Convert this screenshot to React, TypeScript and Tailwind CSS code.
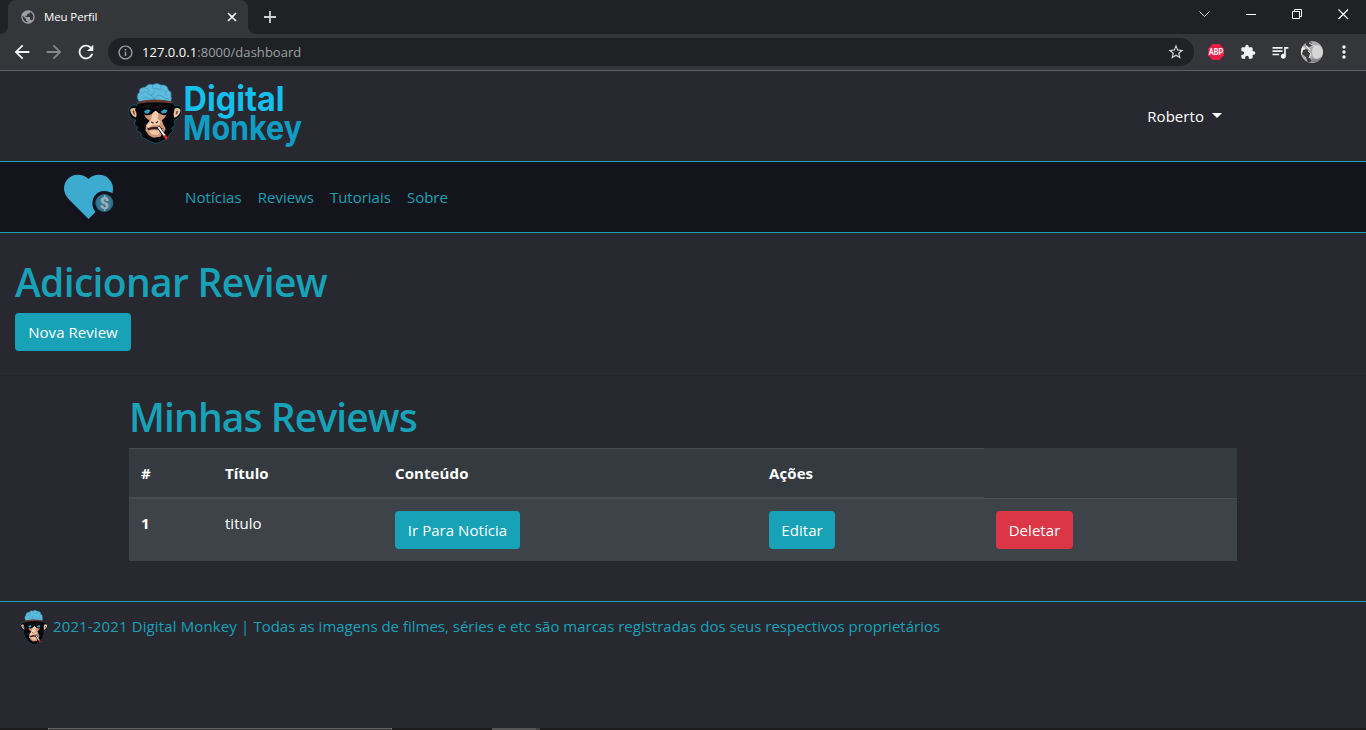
import type { ReactNode } from 'react';
import {
  MdArrowBack,
  MdArrowForward,
  MdExtension,
  MdInfoOutline,
  MdMoreVert,
  MdPublic,
  MdQueueMusic,
  MdRefresh,
  MdStarBorder,
} from 'react-icons/md';

function Monkey({ className }: { className: string }) {
  return (
    <svg viewBox="24 19 161 179" preserveAspectRatio="none" className={className} aria-hidden="true">
      <path
        d="M54 74 L156 74 Q160 82 164 86 Q182 80 184 98 Q186 116 170 125 Q165 126 161 132 L165 142 L154 152 L159 160 L147 170 L143 184 L129 187 L118 194 L104 196 L88 190 L78 184 L64 178 L63 166 L49 158 L53 148 L43 140 L47 128 Q32 126 26 108 Q23 88 38 84 Q46 82 50 86 Z"
        fill="#07080b"
        stroke="#176a84"
        strokeWidth="2"
      />
      <path d="M56 72 Q46 56 58 46 Q56 32 76 31 Q84 19 98 24 Q112 17 122 25 Q142 23 144 39 Q156 46 152 58 Q156 68 150 74 Q100 66 60 74 Z" fill="#5ebbdd" stroke="#2a83a6" strokeWidth="2" />
      <path
        d="M64 52 Q74 38 84 50 T104 44 M76 34 Q88 36 86 46 M98 26 Q94 38 106 36 T120 42 M124 28 Q116 36 130 42 M140 42 Q128 46 140 56 M66 66 Q76 56 86 64 T108 58 Q116 50 126 58 T146 66 M92 52 Q96 62 106 66"
        fill="none"
        stroke="#3b9bbf"
        strokeWidth="2.4"
      />
      <path d="M54 73 Q104 62 156 73 L156 79 Q104 72 54 80 Z" fill="#6b3a2c" />
      <path d="M30 98 Q36 90 47 94 L45 99 Q52 108 48 120 Q34 116 30 98 Z" fill="#eab896" />
      <path d="M37 101 Q42 98 43 104 L45 113 Q39 110 37 101 Z" fill="#6c4033" />
      <path d="M181 98 Q174 89 163 94 L162 101 Q157 110 162 121 Q178 116 181 98 Z" fill="#f0c3a1" />
      <path d="M174 101 Q168 99 167 105 L166 113 Q172 110 174 101 Z" fill="#7a4a3a" />
      <path d="M62 88 Q82 82 102 92 Q126 80 148 89 L147 96 L62 96 Z" fill="#1b1516" />
      <path d="M70 108 L94 108 L105 102 L116 108 L140 108 L134 120 L125 128 L130 142 Q140 152 132 162 L120 177 L100 180 L86 172 L76 158 L78 142 L88 130 L77 120 Z" fill="#cf967a" />
      <path d="M98 106 L107 100 L115 108 L112 124 L122 132 L118 142 L98 143 L84 151 L80 144 L92 128 Z" fill="#f6cfaf" />
      <path d="M93 133 L101 137 M107 136 L114 132" fill="none" stroke="#4c302d" strokeWidth="3.5" />
      <path d="M82 152 Q102 143 128 152 L122 158 Q102 151 84 158 Z" fill="#3a1e22" />
      <path d="M86 160 Q102 155 120 161 L114 171 L96 170 Z" fill="#f4c7a6" />
      <path d="M60 91 Q84 89 104 95 Q126 89 154 91 L150 105 Q137 119 121 110 L106 99 L94 111 Q76 119 64 105 Z" fill="#05070b" />
      <path d="M71 103 L82 96 L91 100 L84 109 L76 108 Z M121 103 L132 96 L142 100 L136 108 L126 108 Z" fill="#2ba6cf" />
      <path d="M114 147 L136 179" stroke="#151116" strokeWidth="10" />
      <path d="M115 148 L136 177" stroke="#f5f2f2" strokeWidth="5.5" />
      <path d="M133 173 L140 183" stroke="#dc2529" strokeWidth="9" />
    </svg>
  );
}

function BrandWords() {
  return (
    <svg viewBox="184 71 120 90" className="ml-[2px] h-[90px] w-[120px] overflow-visible" fontFamily="Inter, sans-serif" fontWeight="700" fontSize="34.5">
      <text x="183.6" y="111" textLength="101" lengthAdjust="spacingAndGlyphs" fill="#14bfec">
        Digital
      </text>
      <text x="183" y="140" textLength="119" lengthAdjust="spacingAndGlyphs" fill="#0f9dc4">
        Monkey
      </text>
    </svg>
  );
}

function HeartCoin() {
  return (
    <svg viewBox="64 174 50 46" className="ml-16 h-[46px] w-[50px]">
      <path d="M88.5 219 L69.5 200 Q64 194.5 64 188.5 A13.7 13.7 0 0 1 77.7 174.8 Q84 174.8 88.5 179 Q93 174.8 99 174.8 A14 14 0 0 1 113 189 L112.5 193 Q98 187 93 199 Q91 207 95.5 212 Z" fill="#3cabcf" />
      <circle cx="104.3" cy="203" r="9" fill="#286f88" />
      <circle cx="104.3" cy="203" r="7.3" fill="#327d95" />
      <text x="104.3" y="208.6" textAnchor="middle" fontSize="16" fontWeight="900" fontFamily="Roboto, sans-serif" fill="#a3acb9">
        $
      </text>
    </svg>
  );
}

function BrowserChrome() {
  return (
    <div className="flex h-[71px] w-full shrink-0 flex-col border-b border-[#5f6164] bg-[#35363a]">
      <div className="flex h-[34px] bg-[#202124]">
        <div className="flex w-2 bg-[#35363a]">
          <span className="h-full w-full rounded-br-lg bg-[#202124]" />
        </div>
        <div className="flex w-[240px] items-center rounded-t-lg bg-[#35363a] pl-3">
          <MdPublic className="size-4 text-[#9aa0a6]" />
          <span className="ml-2 text-[11.5px] tracking-[-0.12px] text-white">Meu Perfil</span>
          <svg viewBox="0 0 10 10" className="mr-[11px] ml-auto size-[10px]" stroke="#fff" strokeWidth="1.7">
            <path d="M1 1 L9 9 M9 1 L1 9" />
          </svg>
        </div>
        <div className="flex w-2 bg-[#35363a]">
          <span className="h-full w-full rounded-bl-lg bg-[#202124]" />
        </div>
        <svg viewBox="0 0 12 12" className="mt-[11px] ml-2 size-3" stroke="#d0d1d4" strokeWidth="1.8">
          <path d="M6 0 V12 M0 6 H12" />
        </svg>
        <svg viewBox="-6 0 150 12" className="mt-2 mr-[17px] ml-auto h-3 w-[150px]" fill="none" stroke="#fff" strokeWidth="1">
          <path d="M-5.5 3.5 L-0.5 8.5 L4.5 3.5" stroke="#dcdddf" />
          <path d="M41 6.5 H51" />
          <path d="M87.5 3.5 H94.5 V10.5 H87.5 Z M89.5 3.5 V1.5 H96.5 V8.5 H94.5" />
          <path d="M133.5 1.5 L143 11 M143 1.5 L133.5 11" strokeWidth="1.2" />
        </svg>
      </div>
      <div className="flex h-9 items-center pl-[11px]">
        <MdArrowBack className="size-[22px] text-[#f1f3f4]" />
        <MdArrowForward className="ml-[10px] size-[22px] text-[#85878b]" />
        <MdRefresh className="ml-[10px] size-[22px] text-[#f1f3f4]" />
        <div className="ml-[11px] flex h-7 w-[1086px] items-center rounded-full bg-[#202124] pr-[9px] pl-[9px]">
          <MdInfoOutline className="size-[17px] text-[#9aa0a6]" />
          <p className="ml-2 text-[13px] tracking-[0.04px] text-[#9aa0a6]">
            <span className="text-white">127.0.0.1</span>:8000/dashboard
          </p>
          <MdStarBorder className="ml-auto size-[18px] text-[#d2d4d7]" />
        </div>
        <svg viewBox="0 0 16 16" className="ml-[14px] size-4">
          <path d="M4.7 0 H11.3 L16 4.7 V11.3 L11.3 16 H4.7 L0 11.3 V4.7 Z" fill="#ed1e45" />
          <text x="8" y="11" textAnchor="middle" fontSize="8.4" fontWeight="700" fontFamily="Roboto, sans-serif" fill="#fff" textLength="14.6" lengthAdjust="spacingAndGlyphs">
            ABP
          </text>
        </svg>
        <MdExtension className="ml-4 size-4 text-[#f1f3f4]" />
        <MdQueueMusic className="ml-[14px] size-5 text-[#f1f3f4]" />
        <svg viewBox="0 0 22 22" className="ml-[11px] size-[22px]">
          <defs>
            <clipPath id="avatar">
              <circle cx="11" cy="11" r="11" />
            </clipPath>
          </defs>
          <g clipPath="url(#avatar)">
            <rect width="22" height="22" fill="#adadad" />
            <ellipse cx="16.5" cy="11" rx="5.5" ry="7" fill="#d6d6d6" />
            <path d="M0 4 L4 7 L3 12 L0 14 Z" fill="#f4f4f4" />
            <path d="M4 0 L9 0 L12 4 L8 6 L5 4 Z M2 9 L6 8 L9 12 L8 16 L11 20 L7 22 L5 16 L1 13 Z" fill="#3c3c3c" />
            <path d="M5 5 L9 9 M8 2 L15 6 M7 10 L10 13 L8 17" fill="none" stroke="#efefef" strokeWidth="1" />
            <path d="M11 17 Q15 20 20 16 L18 21 L10 21 Z" fill="#858585" />
          </g>
        </svg>
        <MdMoreVert className="ml-[11px] size-5 text-[#f1f3f4]" />
      </div>
    </div>
  );
}

function Button({ className, children }: { className: string; children: ReactNode }) {
  return (
    <button type="button" className={`flex h-[38px] items-center justify-center rounded-[4px] pb-px tracking-[0.05px] whitespace-nowrap text-white ${className}`}>
      {children}
    </button>
  );
}

const TABLE_COLUMNS = 'grid grid-cols-[84px_170px_374px_227px_253px]';

export default function App() {
  return (
    <div className="flex h-[730px] w-[1366px] flex-col overflow-hidden bg-[#282830] font-['Open_Sans','Noto_Sans',sans-serif] text-[15px] leading-6 text-[#17a2b8]">
      <BrowserChrome />

      <header className="flex h-[91px] shrink-0 items-start border-b border-[#17a2b8] pr-36 pl-32">
        <Monkey className="mt-3 h-[61px] w-[54px]" />
        <BrandWords />
        <button type="button" className="mt-[33px] ml-auto flex items-center text-white">
          <span className="tracking-[0.05px]">Roberto</span>
          <svg viewBox="0 0 10 5" className="mb-[2px] ml-2 h-[5px] w-[10px]" fill="#fff">
            <path d="M0 0 H10 L5 5 Z" />
          </svg>
        </button>
      </header>

      <nav className="flex h-[71px] shrink-0 items-center border-b border-[#17a2b8] bg-[#14151c]">
        <HeartCoin />
        <div className="ml-[71px] flex gap-4">
          <a className="tracking-[0.1px]">Notícias</a>
          <a>Reviews</a>
          <a>Tutoriais</a>
          <a>Sobre</a>
        </div>
      </nav>

      <section className="flex h-[143px] shrink-0 flex-col items-start border-b border-[#242429] pt-[25px] pl-[15px]">
        <h1 className="mb-[7px] text-[39px] leading-[48px] font-semibold tracking-[-0.68px]">Adicionar Review</h1>
        <Button className="w-[116px] bg-[#17a2b8]">Nova Review</Button>
      </section>

      <section className="h-[225px] shrink-0 px-[129px] pt-[17px]">
        <h1 className="mb-[7px] text-[39px] leading-[48px] font-semibold tracking-[-0.9px]">Minhas Reviews</h1>
        <div className="text-white">
          <div className={`${TABLE_COLUMNS} h-[51px] bg-[#343a40] font-bold`}>
            <div className="border-t border-b-2 border-[#454d55] px-3 pt-3">#</div>
            <div className="border-t border-b-2 border-[#454d55] px-3 pt-3">Título</div>
            <div className="border-t border-b-2 border-[#454d55] px-3 pt-3 tracking-[0.1px]">Conteúdo</div>
            <div className="border-t border-b-2 border-[#454d55] px-3 pt-3 tracking-[0.1px]">Ações</div>
            <div className="border-b border-[#454d55]" />
          </div>
          <div className={`${TABLE_COLUMNS} h-[62px] bg-[#3e4349] pt-3`}>
            <div className="px-3 font-bold">1</div>
            <div className="px-3">titulo</div>
            <div className="px-3">
              <Button className="w-[125px] bg-[#17a2b8]">Ir Para Notícia</Button>
            </div>
            <div className="px-3">
              <Button className="w-[66px] bg-[#17a2b8]">Editar</Button>
            </div>
            <div className="px-3">
              <Button className="w-[77px] bg-[#dc3545]">Deletar</Button>
            </div>
          </div>
        </div>
      </section>

      <footer className="flex flex-1 items-start border-t border-[#17a2b8] pt-2 pl-5">
        <Monkey className="h-[35px] w-[28px]" />
        <p className="mt-1 ml-[5px]">
          <span className="tracking-[0.13px]">2021-2021 Digital Monkey | </span>
          Todas as imagens de filmes, séries e etc são marcas registradas dos seus respectivos proprietários
        </p>
      </footer>

      <div className="flex h-[2px] shrink-0 bg-[#1d1c1d]">
        <span className="ml-12 w-[344px] border-x border-t border-[#646464] bg-[#343434]" />
        <span className="ml-[100px] w-11 bg-[#555]" />
        <span className="w-[4px] bg-[#3e3e3e]" />
      </div>
    </div>
  );
}
